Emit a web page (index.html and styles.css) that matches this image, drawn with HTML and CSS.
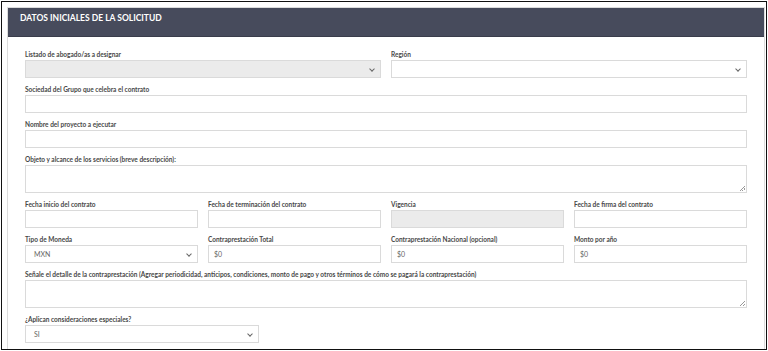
FILE: index.html
```html
<!DOCTYPE html>
<html lang="es">
<head>
    <meta charset="UTF-8">
    <meta name="viewport" content="width=device-width, initial-scale=1.0">
    <title>Datos iniciales de la solicitud</title>
    <link rel="stylesheet" href="styles.css">
</head>
<body>
    <div class="frame">
        <!-- Card -->
        <div class="card">
            <div class="card-header">DATOS INICIALES DE LA SOLICITUD</div>
            <div class="card-body">
                <div class="row cols-2">
                    <div class="field">
                        <label>Listado de abogado/as a designar</label>
                        <div class="control select disabled"><span></span></div>
                    </div>
                    <div class="field">
                        <label>Región</label>
                        <div class="control select"><span></span></div>
                    </div>
                </div>

                <div class="field">
                    <label>Sociedad del Grupo que celebra el contrato</label>
                    <div class="control"></div>
                </div>

                <div class="field">
                    <label>Nombre del proyecto a ejecutar</label>
                    <div class="control"></div>
                </div>

                <div class="field">
                    <label>Objeto y alcance de los servicios (breve descripción):</label>
                    <div class="control textarea"></div>
                </div>

                <div class="row cols-4">
                    <div class="field">
                        <label>Fecha inicio del contrato</label>
                        <div class="control"></div>
                    </div>
                    <div class="field">
                        <label>Fecha de terminación del contrato</label>
                        <div class="control"></div>
                    </div>
                    <div class="field">
                        <label>Vigencia</label>
                        <div class="control disabled"></div>
                    </div>
                    <div class="field">
                        <label>Fecha de firma del contrato</label>
                        <div class="control"></div>
                    </div>
                </div>

                <div class="row cols-4">
                    <div class="field">
                        <label>Tipo de Moneda</label>
                        <div class="control select"><span>MXN</span></div>
                    </div>
                    <div class="field">
                        <label>Contraprestación Total</label>
                        <div class="control"><span>$0</span></div>
                    </div>
                    <div class="field">
                        <label>Contraprestación Nacional (opcional)</label>
                        <div class="control"><span>$0</span></div>
                    </div>
                    <div class="field">
                        <label>Monto por año</label>
                        <div class="control"><span>$0</span></div>
                    </div>
                </div>

                <div class="field">
                    <label>Señale el detalle de la contraprestación (Agregar periodicidad, anticipos, condiciones, monto de pago y otros términos de cómo se pagará la contraprestación)</label>
                    <div class="control textarea"></div>
                </div>

                <div class="row cols-3">
                    <div class="field">
                        <label>¿Aplican consideraciones especiales?</label>
                        <div class="control select"><span>SI</span></div>
                    </div>
                </div>
            </div>
        </div>
    </div>
</body>
</html>
```
FILE: styles.css
```css
* {
    margin: 0;
    padding: 0;
    box-sizing: border-box;
}

body {
    background: #ffffff;
    font-family: 'Lato', 'Liberation Sans', sans-serif;
    padding: 1px;
}

.frame {
    width: 766px;
    height: 349px;
    border: 1px solid #111111;
    padding: 5px 1px 0 5px;
    overflow: hidden;
}

/* Card */
.card {
    border: 1px solid #dcdcdc;
    border-bottom: none;
    height: 100%;
}

.card-header {
    background: #474b5c;
    color: #ffffff;
    font-size: 8.5px;
    font-weight: 700;
    line-height: 10px;
    height: 29px;
    padding: 5px 0 0 12px;
    border-bottom: 1px solid #3a3d4b;
}

.card-body {
    padding: 11px 17px 0 17px;
}

/* Grid rows */
.row {
    display: grid;
    column-gap: 10px;
}

.cols-2 { grid-template-columns: 1fr 1fr; }
.cols-3 { grid-template-columns: 1fr 1fr 1fr; }
.cols-4 { grid-template-columns: 1fr 1fr 1fr 1fr; }

/* Fields */
.field {
    margin-bottom: 5px;
}

.field label {
    display: block;
    font-size: 6.5px;
    font-weight: 700;
    color: #484848;
    height: 12px;
    line-height: 13px;
    white-space: nowrap;
}

.control {
    position: relative;
    height: 18px;
    border: 1px solid #dadada;
    background: #ffffff;
    font-size: 7px;
    color: #666666;
    line-height: 16px;
    padding-left: 5px;
}

.control.disabled {
    background: #ebebeb;
}

.control.select {
    padding-left: 8px;
}

.control.select::after {
    content: '';
    position: absolute;
    right: 6px;
    top: 6px;
    width: 3px;
    height: 3px;
    border-right: 1px solid #666666;
    border-bottom: 1px solid #666666;
    transform: rotate(45deg);
}

.control.textarea {
    height: 28px;
}

.control.textarea::after {
    content: '';
    position: absolute;
    right: 1px;
    bottom: 1px;
    width: 5px;
    height: 5px;
    background: linear-gradient(135deg, transparent 45%, #999 45%, #999 55%, transparent 55%, transparent 70%, #999 70%, #999 80%, transparent 80%);
}
```
